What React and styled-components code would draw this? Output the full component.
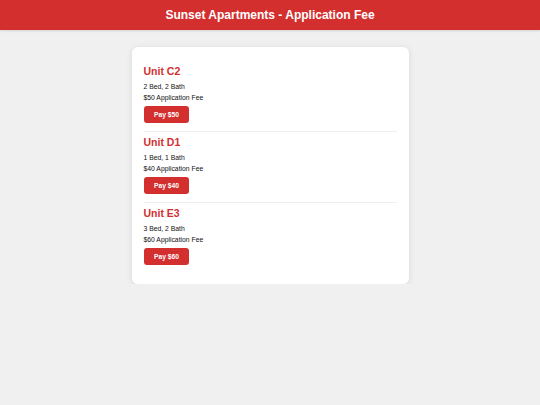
import React from 'react'
import styled, { createGlobalStyle } from 'styled-components'

const GlobalStyle = createGlobalStyle`
    html, body {
        margin: 0;
        padding: 0;
        background: #f0f0f0;
        font-family: "Liberation Sans", Arial, sans-serif;
    }
`

const Header = styled.header`
    height: 30px;
    background: #d32f2f;
    display: flex;
    align-items: center;
    justify-content: center;
    box-shadow: 0 1px 2px rgba(0, 0, 0, 0.12);
`
const Title = styled.h1`
    margin: 0;
    color: white;
    font-size: 12px;
    font-weight: 700;
`
const Main = styled.main`
    padding-top: 17px;
    display: flex;
    justify-content: center;
`
const Card = styled.div`
    width: 277px;
    box-sizing: border-box;
    background: white;
    border-radius: 6px;
    padding: 14px 12px 11px;
    box-shadow: 0 1px 6px rgba(0, 0, 0, 0.1);
`
const Unit = styled.div`
    padding: 4px 0 7.5px;
    border-bottom: 1px solid #eeeeee;
    &:last-child {
        border-bottom: none;
    }
`
const UnitName = styled.h2`
    margin: 0 0 3.7px;
    color: #d32f2f;
    font-size: 10.5px;
    font-weight: 700;
`
const Detail = styled.p`
    margin: 0;
    font-size: 6.8px;
    line-height: 11px;
    color: #111;
`
const PayButton = styled.button`
    margin-top: 3.3px;
    padding: 5px 10.5px;
    border: none;
    border-radius: 3px;
    background: #d32f2f;
    color: white;
    font-family: inherit;
    font-size: 6.7px;
    font-weight: 700;
    line-height: 7.5px;
    cursor: pointer;
`

const units = [
    { name: 'Unit C2', rooms: '2 Bed, 2 Bath', fee: 50 },
    { name: 'Unit D1', rooms: '1 Bed, 1 Bath', fee: 40 },
    { name: 'Unit E3', rooms: '3 Bed, 2 Bath', fee: 60 },
]

const App = () => {
    return (
        <>
            <GlobalStyle />
            <Header>
                <Title>Sunset Apartments - Application Fee</Title>
            </Header>
            <Main>
                <Card>
                    {units.map(u => (
                        <Unit key={u.name}>
                            <UnitName>{u.name}</UnitName>
                            <Detail>{u.rooms}</Detail>
                            <Detail>${u.fee} Application Fee</Detail>
                            <PayButton>Pay ${u.fee}</PayButton>
                        </Unit>
                    ))}
                </Card>
            </Main>
        </>
    )
}

export default App
